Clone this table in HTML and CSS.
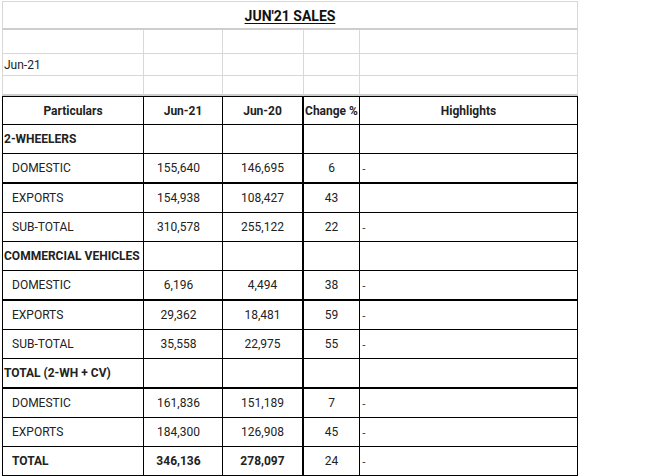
FILE: index.html
```html
<!DOCTYPE html>
<html>
<head>
<meta charset="utf-8">
<link rel="stylesheet" href="styles.css">
</head>
<body>
<div class="sheet">
  <div class="row grey title-row"><div class="title"><span>JUN'21 SALES</span></div></div>
  <div class="row grey"><div></div><div></div><div></div><div></div><div></div></div>
  <div class="row grey"><div class="lbl">Jun-21</div><div></div><div></div><div></div><div></div></div>
  <div class="row grey thick-grey"><div></div><div></div><div></div><div></div><div></div></div>

  <div class="row head"><div class="c b">Particulars</div><div class="c b">Jun-21</div><div class="c b">Jun-20</div><div class="c b">Change %</div><div class="c b">Highlights</div></div>

  <div class="row"><div class="sec b">2-WHEELERS</div><div></div><div></div><div></div><div></div></div>
  <div class="row thick"><div class="item">DOMESTIC</div><div class="c n1">155,640</div><div class="c">146,695</div><div class="c">6</div><div class="hl">-</div></div>
  <div class="row"><div class="item">EXPORTS</div><div class="c n1">154,938</div><div class="c">108,427</div><div class="c">43</div><div class="hl"></div></div>
  <div class="row"><div class="item">SUB-TOTAL</div><div class="c n1">310,578</div><div class="c">255,122</div><div class="c">22</div><div class="hl">-</div></div>

  <div class="row"><div class="sec b">COMMERCIAL VEHICLES</div><div></div><div></div><div></div><div></div></div>
  <div class="row thick"><div class="item">DOMESTIC</div><div class="c n1">6,196</div><div class="c">4,494</div><div class="c">38</div><div class="hl">-</div></div>
  <div class="row"><div class="item">EXPORTS</div><div class="c n1">29,362</div><div class="c">18,481</div><div class="c">59</div><div class="hl">-</div></div>
  <div class="row"><div class="item">SUB-TOTAL</div><div class="c n1">35,558</div><div class="c">22,975</div><div class="c">55</div><div class="hl">-</div></div>

  <div class="row thick"><div class="sec b">TOTAL (2-WH + CV)</div><div></div><div></div><div></div><div></div></div>
  <div class="row"><div class="item">DOMESTIC</div><div class="c n1">161,836</div><div class="c">151,189</div><div class="c">7</div><div class="hl">-</div></div>
  <div class="row"><div class="item">EXPORTS</div><div class="c n1">184,300</div><div class="c">126,908</div><div class="c">45</div><div class="hl">-</div></div>
  <div class="row"><div class="item b">TOTAL</div><div class="c n1 b">346,136</div><div class="c b">278,097</div><div class="c">24</div><div class="hl">-</div></div>
</div>
</body>
</html>
```

FILE: styles.css
```css
html, body {
  margin: 0;
  padding: 0;
  background: #fff;
}

.sheet {
  margin: 1px 0 0 2px;
  width: 576px;
  display: grid;
  grid-template-columns: 142px 79px 81px 56px 218px;
  grid-template-rows: 29px 24px 22px 20px 29px 29px 30px 29px 29px 29px 30px 29px 29px 30px 29px 29px 29px;
  font-family: Roboto, "Liberation Sans", sans-serif;
  font-size: 12px;
  color: #222;
}

.row {
  display: contents;
}

.row > div {
  box-sizing: border-box;
  border-right: 1px solid #000;
  border-bottom: 1px solid #000;
  display: flex;
  align-items: center;
  white-space: nowrap;
  overflow: hidden;
}

.row > div:first-child {
  border-left: 1px solid #000;
}

.row > div:nth-child(3) {
  border-right-width: 2px;
}

.row.thick > div {
  border-bottom-width: 2px;
}

.row.head > div {
  border-top: 1px solid #000;
}

/* grey (unformatted) rows at the top */
.row.grey > div {
  border-color: #d8d8d8;
}

.row.grey > div:nth-child(3) {
  border-right-width: 1px;
}

.row.thick-grey > div {
  border-bottom: 2px solid #cdcdcd;
}

.title-row .title {
  grid-column: 1 / -1;
  border-top: 1px solid #d8d8d8;
  border-bottom: 2px solid #cdcdcd !important;
  justify-content: center;
  font-size: 14px;
  font-weight: 700;
  color: #111;
}

.title span {
  text-decoration: underline;
  text-underline-offset: 2px;
  padding-top: 1px;
}

.lbl {
  padding-left: 1px;
}

.c {
  justify-content: center;
}

.n1 {
  padding-right: 9px;
}

.b {
  font-weight: 700;
}

.sec {
  padding-left: 1px;
}

.item {
  padding-left: 9px;
}

.hl {
  padding-left: 2px;
  font-family: "Liberation Sans", Arial, sans-serif;
  font-size: 11px;
  color: #333;
}
```
